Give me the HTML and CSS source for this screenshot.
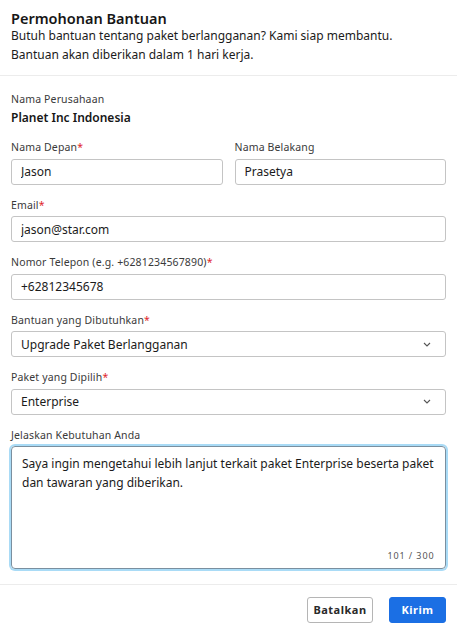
FILE: index.html
```html
<!DOCTYPE html>
<html lang="id">
<head>
<meta charset="utf-8">
<title>Permohonan Bantuan</title>
<link rel="stylesheet" href="styles.css">
</head>
<body>
<div class="modal">
  <header class="head">
    <h1 class="title">Permohonan Bantuan</h1>
    <p class="sub">Butuh bantuan tentang paket berlangganan? Kami siap membantu.<br>Bantuan akan diberikan dalam 1 hari kerja.</p>
  </header>
  <form class="body">
    <div class="company">
      <div class="label">Nama Perusahaan</div>
      <div class="company-name">Planet Inc Indonesia</div>
    </div>
    <div class="row">
      <div class="field">
        <label class="label">Nama Depan<span class="req">*</span></label>
        <input class="input" type="text" value="Jason">
      </div>
      <div class="field">
        <label class="label">Nama Belakang</label>
        <input class="input" type="text" value="Prasetya">
      </div>
    </div>
    <div class="field">
      <label class="label">Email<span class="req">*</span></label>
      <input class="input" type="text" value="jason@star.com">
    </div>
    <div class="field">
      <label class="label">Nomor Telepon (e.g. +6281234567890)<span class="req">*</span></label>
      <input class="input" type="text" value="+62812345678">
    </div>
    <div class="field">
      <label class="label">Bantuan yang Dibutuhkan<span class="req">*</span></label>
      <div class="select">
        <span>Upgrade Paket Berlangganan</span>
        <svg class="chev" width="8" height="5" viewBox="0 0 8 5"><path d="M1 1l3 3 3-3" fill="none" stroke="#555" stroke-width="1.1"/></svg>
      </div>
    </div>
    <div class="field">
      <label class="label">Paket yang Dipilih<span class="req">*</span></label>
      <div class="select">
        <span>Enterprise</span>
        <svg class="chev" width="8" height="5" viewBox="0 0 8 5"><path d="M1 1l3 3 3-3" fill="none" stroke="#555" stroke-width="1.1"/></svg>
      </div>
    </div>
    <div class="field">
      <label class="label">Jelaskan Kebutuhan Anda</label>
      <div class="textbox">
        <div class="tb-text">Saya ingin mengetahui lebih lanjut terkait paket Enterprise beserta paket dan tawaran yang diberikan.</div>
        <div class="counter">101 / 300</div>
      </div>
    </div>
  </form>
  <footer class="foot">
    <button class="btn btn-ghost" type="button">Batalkan</button>
    <button class="btn btn-primary" type="button">Kirim</button>
  </footer>
</div>
</body>
</html>
```

FILE: styles.css
```css
* { box-sizing: border-box; }
html, body { margin: 0; padding: 0; background: #fff; }
body {
  font-family: "Noto Sans", "Open Sans", sans-serif;
  color: #1b1b1b;
  width: 457px;
}
.modal { display: flex; flex-direction: column; }
.head {
  padding: 8px 11px 11px;
  border-bottom: 1px solid #ececec;
}
.title {
  margin: 0;
  font-size: 14.5px;
  line-height: 20px;
  font-weight: 600;
  color: #161616;
}
.sub {
  margin: -2px 0 0;
  font-size: 12px;
  line-height: 19px;
  color: #1b1b1b;
}
.body {
  padding: 15px 11px 15px;
  display: flex;
  flex-direction: column;
  gap: 12px;
  border-bottom: 1px solid #ececec;
}
.company { display: flex; flex-direction: column; gap: 2px; }
.company-name {
  font-size: 12px;
  line-height: 18px;
  font-weight: 600;
  color: #161616;
}
.label {
  display: block;
  font-size: 10.5px;
  line-height: 16px;
  color: #3a3a3a;
  letter-spacing: 0.15px;
}
.req { color: #e0262b; }
.row { display: grid; grid-template-columns: 1fr 1fr; gap: 12px; }
.field { display: flex; flex-direction: column; gap: 3.5px; }
.input, .select {
  height: 26px;
  border: 1px solid #c4c4c4;
  border-radius: 3px;
  padding: 0 9px;
  font-family: inherit;
  font-size: 12px;
  color: #1b1b1b;
  background: #fff;
  width: 100%;
  outline: none;
  margin: 0;
}
.select {
  display: flex;
  align-items: center;
  justify-content: space-between;
  padding-right: 14px;
}
.chev { display: block; }
.textbox {
  height: 123px;
  border: 1px solid #7a8f9f;
  border-radius: 4px;
  box-shadow: 0 0 0 2px #a9dbf6;
  padding: 8px 10px 6px 10px;
  display: flex;
  flex-direction: column;
  justify-content: space-between;
}
.tb-text {
  font-size: 12px;
  line-height: 18.5px;
  color: #1b1b1b;
}
.counter {
  align-self: flex-end;
  font-size: 9px;
  line-height: 12px;
  letter-spacing: 0.9px;
  color: #555;
  padding-right: 0.5px;
}
.foot {
  display: flex;
  justify-content: flex-end;
  gap: 16px;
  padding: 11.5px 11px 11.5px;
}
.btn {
  height: 26px;
  border-radius: 3px;
  font-family: inherit;
  font-size: 11px;
  font-weight: 700;
  letter-spacing: 0.5px;
  padding: 0;
  cursor: pointer;
}
.btn-ghost {
  background: #fff;
  border: 1px solid #b5b5b5;
  color: #2a2a2a;
  width: 66px;
}
.btn-primary {
  background: #1b6fe4;
  border: 1px solid #1b6fe4;
  color: #fff;
  width: 57px;
}
```
